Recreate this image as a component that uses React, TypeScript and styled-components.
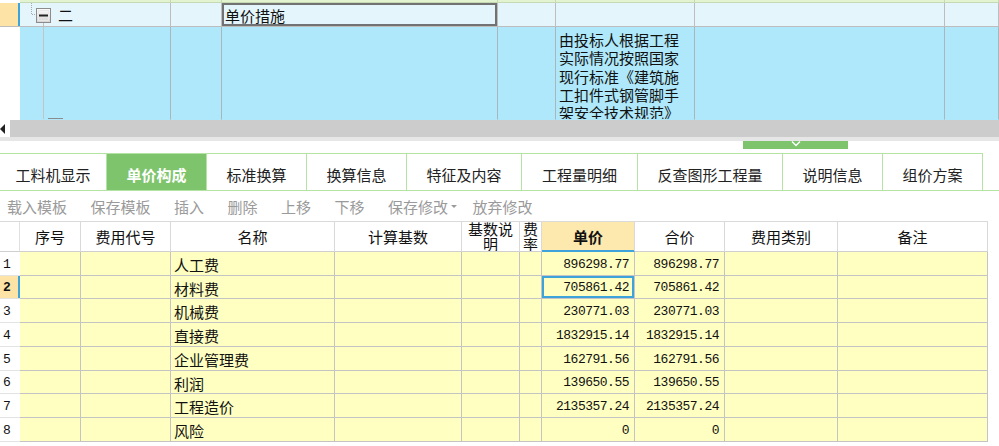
import React from "react";
import styled, { createGlobalStyle, css } from "styled-components";

const CJK = `"Noto Sans CJK SC", "Noto Sans", sans-serif`;
const MONO = `"Liberation Mono", "DejaVu Sans Mono", monospace`;

const GlobalStyle = createGlobalStyle`
  html, body { margin: 0; padding: 0; background: #fff; }
  body { font-family: ${CJK}; width: 999px; height: 446px; overflow: hidden; }
  * { box-sizing: border-box; }
`;

const Page = styled.div`
  width: 999px;
  height: 446px;
  display: flex;
  flex-direction: column;
  overflow: hidden;
  background: #fff;
  color: #111;
`;

/* ---------- upper tree grid ---------- */
const TopGrid = styled.div`
  display: grid;
  grid-template-columns: 20px 151px 51px 276px 58px 139px 250px 54px;
  grid-template-rows: 3px 24px 93px;
  height: 120px;
  overflow: hidden;
`;

type Tone = "green" | "light" | "blue";
const toneBg: Record<Tone, string> = {
  green: "#e2f4cf",
  light: "#e4f6fc",
  blue: "#aee8fa",
};
const toneLine: Record<Tone, string> = {
  green: "#c5d9b5",
  light: "#bdbdbd",
  blue: "#a9b6bc",
};

const TopCell = styled.div<{ $tone: Tone; $focus?: boolean }>`
  overflow: hidden;
  font-size: 15px;
  line-height: 18.3px;
  background: ${(p) => toneBg[p.$tone]};
  border-right: 1px solid ${(p) => toneLine[p.$tone]};
  border-bottom: 1px solid ${(p) => (p.$tone === "blue" ? "transparent" : toneLine[p.$tone])};
  ${(p) =>
    p.$focus &&
    css`
      box-shadow: inset 0 0 0 2px #727272;
      padding: 4px 3px 0;
    `}
`;

const TopGutter = styled.div<{ $sel?: boolean }>`
  background: ${(p) => (p.$sel ? "#fde3a6" : "#fff")};
  ${(p) => p.$sel && css`box-shadow: inset -2px 0 0 #3ea3db; border-bottom: 1px solid #bdbdbd;`}
`;

const TreeCell = styled(TopCell)`
  display: flex;
  align-items: flex-start;
`;

const TreeLabel = styled.span`
  padding-top: 2px;
  font-size: 15px;
  line-height: 20px;
`;

const NoteText = styled(TopCell)`
  padding: 4px 2px 0 3px;
  font-size: 15px;
  line-height: 18.3px;
  white-space: nowrap;
`;

/* ---------- scrollbar & splitter ---------- */
const HScroll = styled.div`
  height: 17px;
  display: flex;
  background: #cccccc;
`;

const ScrollBtn = styled.div`
  width: 10px;
  background: #fff;
  display: flex;
  align-items: center;
`;

const Splitter = styled.div`
  height: 16px;
  display: flex;
  flex-direction: column;
`;

const SplitStrip = styled.div`
  height: 4px;
  background: #e6e6e6;
`;

const HandleRow = styled.div`
  display: flex;
  padding-left: 743px;
`;

const Handle = styled.div`
  width: 105px;
  height: 8px;
  background: #7ec46c;
  display: flex;
  justify-content: center;
  align-items: flex-start;
`;

/* ---------- tabs ---------- */
const TabBar = styled.div`
  height: 38px;
  display: flex;
  border-bottom: 1px solid #b5e3a3;
`;

const Tab = styled.div<{ $w: number; $active?: boolean }>`
  width: ${(p) => p.$w}px;
  height: 37px;
  display: flex;
  align-items: center;
  justify-content: center;
  padding-top: 5px;
  border-top: 1px solid #b5e3a3;
  border-right: 1px solid #b5e3a3;
  font-size: 15px;
  color: ${(p) => (p.$active ? "#fff" : "#222")};
  font-weight: ${(p) => (p.$active ? 700 : 400)};
  background: ${(p) => (p.$active ? "#7ec46c" : "#fff")};
`;

/* ---------- toolbar ---------- */
const Toolbar = styled.div`
  height: 30px;
  display: flex;
  align-items: center;
  padding-left: 7px;
  gap: 23.5px;
  font-size: 15px;
  color: #9a9a9a;
`;

const ToolItem = styled.span<{ $menu?: boolean }>`
  display: flex;
  align-items: center;
  ${(p) => p.$menu && css`margin-right: -8px;`}
`;

const Caret = styled.span`
  margin-left: 3px;
  width: 0;
  height: 0;
  border-left: 3px solid transparent;
  border-right: 3px solid transparent;
  border-top: 3px solid #9a9a9a;
`;

/* ---------- table ---------- */
const Table = styled.div`
  width: 988px;
  display: grid;
  grid-template-columns: 20px 61px 90px 164px 127px 58px 22px 93px 90px 113px 150px;
  grid-template-rows: 30px 24px 23px 24px 24px 24px 23px 24px 24px;
  border-top: 1px solid #dadada;
`;

const HeadCell = styled.div<{ $active?: boolean; $stack?: boolean }>`
  overflow: hidden;
  text-align: center;
  font-size: 15px;
  line-height: ${(p) => (p.$stack ? "14.5px" : "20px")};
  padding-top: ${(p) => (p.$stack ? "0" : "5px")};
  font-weight: ${(p) => (p.$active ? 700 : 400)};
  background: ${(p) => (p.$active ? "#fde9ae" : "#fff")};
  border-right: 1px solid #d9d9d9;
  border-bottom: 1px solid ${(p) => (p.$active ? "#3ea3db" : "#cfcfcf")};
  ${(p) => p.$active && css`box-shadow: inset 0 -1px 0 #3ea3db;`}
  word-break: break-all;
`;

const HeadGutter = styled.div`
  background: #fff;
  border-bottom: 1px solid #cfcfcf;
  border-right: 1px solid #e0e0e0;
`;

const RowNum = styled.div<{ $sel?: boolean }>`
  display: flex;
  align-items: center;
  padding: 1px 0 0 3px;
  background: ${(p) => (p.$sel ? "#fde3a6" : "#fff")};
  border-bottom: 1px solid #e3e3e3;
  font-family: ${MONO};
  font-size: 13px;
  font-weight: ${(p) => (p.$sel ? 700 : 400)};
  ${(p) => p.$sel && css`box-shadow: inset -2px 0 0 #3ea3db;`}
`;

const Cell = styled.div<{ $num?: boolean; $focus?: boolean }>`
  display: flex;
  align-items: center;
  overflow: hidden;
  white-space: nowrap;
  justify-content: ${(p) => (p.$num ? "flex-end" : "flex-start")};
  padding: ${(p) => (p.$num ? "1px 5px 0 0" : "2px 0 0 3px")};
  background: #ffffc2;
  border-right: 1px solid #c4c4c4;
  border-bottom: 1px solid #c4c4c4;
  font-family: ${(p) => (p.$num ? MONO : CJK)};
  font-size: ${(p) => (p.$num ? "13px" : "15px")};
  letter-spacing: ${(p) => (p.$num ? "-0.5px" : "normal")};
  ${(p) => p.$focus && css`box-shadow: inset 0 0 0 2px #3ea3db;`}
`;

/* ---------- drawings ---------- */
const TreeHead = () => (
  <svg width="38" height="23" viewBox="0 0 38 23" style={{ flex: "none" }}>
    <defs>
      <linearGradient id="tb" x1="0" y1="0" x2="0" y2="1">
        <stop offset="0" stopColor="#fbfbfb" />
        <stop offset="1" stopColor="#d4d4d4" />
      </linearGradient>
    </defs>
    <path d="M11.5 0 V11.5 H16" stroke="#a8a8a8" fill="none" strokeDasharray="1 1" />
    <rect x="16.5" y="5.5" width="14" height="14" fill="url(#tb)" stroke="#8c8c8c" />
    <rect x="18.5" y="7.5" width="10" height="10" fill="none" stroke="#e9e9e9" />
    <path d="M19 12.5 H28" stroke="#222" strokeWidth="2" />
    <path d="M23.5 20 V23" stroke="#c0c0c0" />
  </svg>
);

const TreeTail = () => (
  <svg width="45" height="93" viewBox="0 0 45 93" style={{ flex: "none" }}>
    <path d="M23.5 0 V93" stroke="#c4c4c4" />
    <rect x="28.5" y="91.5" width="14" height="14" fill="#f4f4f4" stroke="#8c8c8c" />
  </svg>
);

const LeftArrow = () => (
  <svg width="6" height="10" viewBox="0 0 6 10">
    <path d="M0 5 L5 0 V10 Z" fill="#222" />
  </svg>
);

const Chevron = () => (
  <svg width="10" height="6" viewBox="0 0 10 6">
    <path d="M1 0.5 L5 4.5 L9 0.5" stroke="#fff" strokeWidth="1.4" fill="none" />
  </svg>
);

/* ---------- data ---------- */
const tabs: { label: string; w: number; active?: boolean }[] = [
  { label: "工料机显示", w: 107 },
  { label: "单价构成", w: 100, active: true },
  { label: "标准换算", w: 100 },
  { label: "换算信息", w: 100 },
  { label: "特征及内容", w: 115 },
  { label: "工程量明细", w: 116 },
  { label: "反查图形工程量", w: 145 },
  { label: "说明信息", w: 100 },
  { label: "组价方案", w: 100 },
];

const tools = ["载入模板", "保存模板", "插入", "删除", "上移", "下移"];

const heads: { label: string; stack?: boolean; active?: boolean }[] = [
  { label: "序号" },
  { label: "费用代号" },
  { label: "名称" },
  { label: "计算基数" },
  { label: "基数说明", stack: true },
  { label: "费率", stack: true },
  { label: "单价", active: true },
  { label: "合价" },
  { label: "费用类别" },
  { label: "备注" },
];

const rows: [string, string, string][] = [
  ["人工费", "896298.77", "896298.77"],
  ["材料费", "705861.42", "705861.42"],
  ["机械费", "230771.03", "230771.03"],
  ["直接费", "1832915.14", "1832915.14"],
  ["企业管理费", "162791.56", "162791.56"],
  ["利润", "139650.55", "139650.55"],
  ["工程造价", "2135357.24", "2135357.24"],
  ["风险", "0", "0"],
];

const note = ["由投标人根据工程", "实际情况按照国家", "现行标准《建筑施", "工扣件式钢管脚手", "架安全技术规范》"];

export default function App() {
  return (
    <>
      <GlobalStyle />
      <Page>
        <TopGrid>
          {/* partial row above */}
          <TopGutter />
          {Array.from({ length: 7 }).map((_, i) => (
            <TopCell key={`g${i}`} $tone="green" />
          ))}

          {/* row 二 */}
          <TopGutter $sel />
          <TreeCell $tone="light">
            <TreeHead />
            <TreeLabel>二</TreeLabel>
          </TreeCell>
          <TopCell $tone="light" />
          <TopCell $tone="light" $focus>
            单价措施
          </TopCell>
          <TopCell $tone="light" />
          <TopCell $tone="light" />
          <TopCell $tone="light" />
          <TopCell $tone="light" />

          {/* blue row */}
          <TopGutter />
          <TreeCell $tone="blue">
            <TreeTail />
          </TreeCell>
          <TopCell $tone="blue" />
          <TopCell $tone="blue" />
          <TopCell $tone="blue" />
          <NoteText $tone="blue">
            {note.map((l, i) => (
              <div key={i}>{l}</div>
            ))}
          </NoteText>
          <TopCell $tone="blue" />
          <TopCell $tone="blue" />
        </TopGrid>

        <HScroll>
          <ScrollBtn>
            <LeftArrow />
          </ScrollBtn>
        </HScroll>

        <Splitter>
          <SplitStrip />
          <HandleRow>
            <Handle>
              <Chevron />
            </Handle>
          </HandleRow>
        </Splitter>

        <TabBar>
          {tabs.map((t) => (
            <Tab key={t.label} $w={t.w} $active={t.active}>
              {t.label}
            </Tab>
          ))}
        </TabBar>

        <Toolbar>
          {tools.map((t) => (
            <ToolItem key={t}>{t}</ToolItem>
          ))}
          <ToolItem $menu>
            保存修改
            <Caret />
          </ToolItem>
          <ToolItem>放弃修改</ToolItem>
        </Toolbar>

        <Table>
          <HeadGutter />
          {heads.map((h) => (
            <HeadCell key={h.label} $stack={h.stack} $active={h.active}>
              {h.label}
            </HeadCell>
          ))}
          {rows.map((r, i) => (
            <React.Fragment key={i}>
              <RowNum $sel={i === 1}>{i + 1}</RowNum>
              <Cell />
              <Cell />
              <Cell>{r[0]}</Cell>
              <Cell />
              <Cell />
              <Cell />
              <Cell $num $focus={i === 1}>
                {r[1]}
              </Cell>
              <Cell $num>{r[2]}</Cell>
              <Cell />
              <Cell />
            </React.Fragment>
          ))}
        </Table>
      </Page>
    </>
  );
}
